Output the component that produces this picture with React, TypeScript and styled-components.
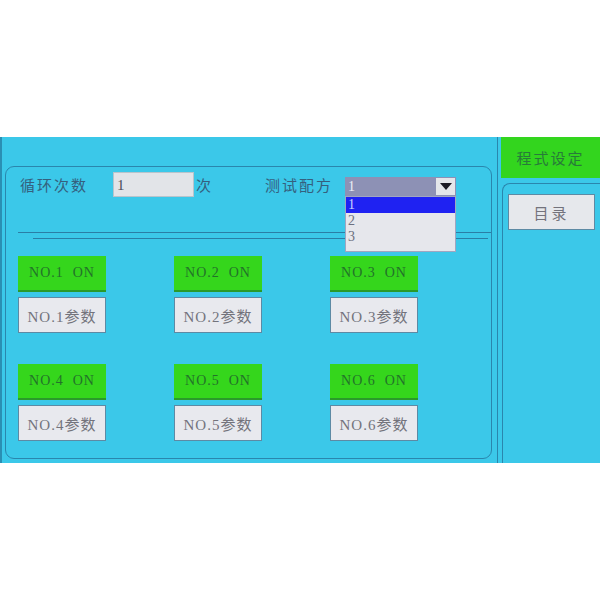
import styled, { createGlobalStyle } from "styled-components";

const GlobalStyle = createGlobalStyle`
  html, body {
    margin: 0;
    padding: 0;
    background: #ffffff;
  }
  * {
    box-sizing: border-box;
  }
`;

const FONT = `"Liberation Serif", "Noto Sans CJK SC", serif`;

const Screen = styled.div`
  margin-top: 137px;
  width: 600px;
  height: 326px;
  display: flex;
  background: #3bc8e9;
  border-left: 2px solid #2a8fb3;
  font-family: ${FONT};
`;

const LeftArea = styled.div`
  width: 495px;
  padding: 29px 5px 4px 3px;
  display: flex;
`;

const Panel = styled.div`
  flex: 1;
  border: 1px solid #2a86ad;
  border-radius: 9px;
  display: flex;
  flex-direction: column;
`;

const TopRow = styled.div`
  display: flex;
  align-items: center;
  height: 25px;
  margin-top: 5px;
  padding-left: 14px;
`;

const Label = styled.span<{ $gap?: number }>`
  font-size: 15px;
  letter-spacing: 2px;
  color: #35607e;
  margin-left: ${(p) => p.$gap ?? 0}px;
  white-space: nowrap;
`;

const CountInput = styled.div`
  width: 81px;
  height: 25px;
  margin-left: 25px;
  background: #e2e4e8;
  border: 1px solid #b8c4cc;
  color: #4a4e5a;
  font-size: 15px;
  padding: 2px 3px;
  line-height: 20px;
`;

const Unit = styled.span`
  font-size: 15px;
  color: #35607e;
  margin-left: 2px;
`;

const SelectWrap = styled.div`
  position: relative;
  margin-left: 12px;
  margin-top: 4px;
`;

const SelectBox = styled.div`
  width: 111px;
  height: 19px;
  background: #8d91b5;
  display: flex;
  justify-content: space-between;
  align-items: stretch;
  color: #eceef6;
  font-size: 14px;
  line-height: 19px;
  padding-left: 3px;
`;

const ArrowBtn = styled.div`
  width: 19px;
  margin: 1px;
  background: #e4e6ea;
  display: flex;
  align-items: center;
  justify-content: center;
`;

const Arrow = styled.div`
  width: 0;
  height: 0;
  border-left: 6px solid transparent;
  border-right: 6px solid transparent;
  border-top: 7px solid #1b1b24;
`;

const OptionList = styled.div`
  position: absolute;
  top: 19px;
  left: 0;
  width: 111px;
  height: 56px;
  background: #e6e7ec;
  border: 1px solid #a0a6c0;
  z-index: 2;
`;

const Option = styled.div<{ $active?: boolean }>`
  height: 16px;
  line-height: 16px;
  font-size: 14px;
  padding-left: 2px;
  background: ${(p) => (p.$active ? "#1f22f2" : "transparent")};
  color: ${(p) => (p.$active ? "#c8d0ff" : "#6c7080")};
`;

const Rule = styled.div<{ $left: number; $right: number; $top: number }>`
  height: 1px;
  margin: ${(p) => p.$top}px ${(p) => p.$right}px 0 ${(p) => p.$left}px;
  background: #2a7ea6;
`;

const Grid = styled.div`
  display: grid;
  grid-template-columns: repeat(3, 88px);
  column-gap: 68px;
  row-gap: 31px;
  padding: 17px 0 0 12px;
`;

const Cell = styled.div`
  display: flex;
  flex-direction: column;
  gap: 5px;
`;

const OnButton = styled.div`
  height: 36px;
  background: #35d61c;
  border-bottom: 2px solid #2a9a2a;
  color: #23722a;
  font-size: 14px;
  letter-spacing: 1px;
  display: flex;
  align-items: center;
  justify-content: center;
  white-space: pre;
`;

const ParamButton = styled.div`
  height: 36px;
  background: #e8e9ee;
  border: 1px solid #5d8aa4;
  color: #73737c;
  font-size: 15px;
  letter-spacing: 1px;
  display: flex;
  align-items: center;
  justify-content: center;
`;

const RightColumn = styled.div`
  flex: 1;
  border-left: 1px solid #2a86ad;
  display: flex;
  flex-direction: column;
`;

const Header = styled.div`
  height: 41px;
  margin-left: 3px;
  background: #33d51e;
  color: #287a3a;
  font-size: 15px;
  letter-spacing: 2px;
  display: flex;
  align-items: center;
  justify-content: center;
`;

const SidePanel = styled.div`
  flex: 1;
  margin: 5px 0 0 4px;
  border: 1px solid #2a86ad;
  border-right: none;
  border-bottom: none;
  border-radius: 8px 0 0 0;
  padding: 10px 5px 0 5px;
`;

const MenuButton = styled.div`
  height: 36px;
  background: #e6e8ec;
  border: 1px solid #5d8aa4;
  color: #73737c;
  font-size: 15px;
  letter-spacing: 3px;
  display: flex;
  align-items: center;
  justify-content: center;
`;

const channels = [1, 2, 3, 4, 5, 6];

const App = () => {
  return (
    <>
      <GlobalStyle />
      <Screen>
        <LeftArea>
          <Panel>
            <TopRow>
              <Label>循环次数</Label>
              <CountInput>1</CountInput>
              <Unit>次</Unit>
              <Label $gap={54}>测试配方</Label>
              <SelectWrap>
                <SelectBox>
                  1
                  <ArrowBtn>
                    <Arrow />
                  </ArrowBtn>
                </SelectBox>
                <OptionList>
                  <Option $active>1</Option>
                  <Option>2</Option>
                  <Option>3</Option>
                </OptionList>
              </SelectWrap>
            </TopRow>
            <Rule $left={12} $right={0} $top={35} />
            <Rule $left={27} $right={3} $top={5} />
            <Grid>
              {channels.map((n) => (
                <Cell key={n}>
                  <OnButton>{`NO.${n}  ON`}</OnButton>
                  <ParamButton>{`NO.${n}参数`}</ParamButton>
                </Cell>
              ))}
            </Grid>
          </Panel>
        </LeftArea>
        <RightColumn>
          <Header>程式设定</Header>
          <SidePanel>
            <MenuButton>目录</MenuButton>
          </SidePanel>
        </RightColumn>
      </Screen>
    </>
  );
};

export default App;
